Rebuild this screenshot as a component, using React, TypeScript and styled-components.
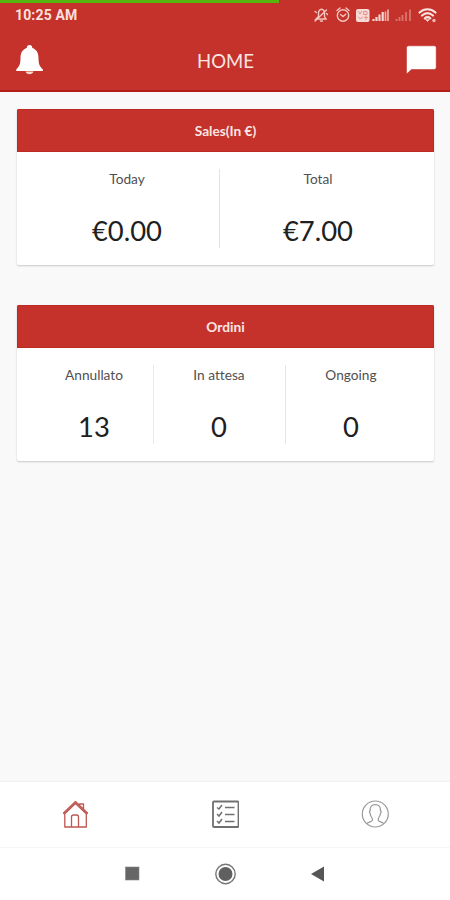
import React from "react";
import styled, { createGlobalStyle } from "styled-components";

const GlobalStyle = createGlobalStyle`
  * { box-sizing: border-box; }
  body { margin: 0; background: #f9f9f9; font-family: Lato, "Liberation Sans", sans-serif; font-variant-ligatures: none; }
  svg { display: block; flex: none; }
`;

const Screen = styled.div`
  width: 450px;
  height: 900px;
  display: flex;
  flex-direction: column;
  overflow: hidden;
  background: #f9f9f9;
`;

const TopArea = styled.div`
  height: 92px;
  background: #c4322b;
  border-bottom: 2px solid #b31d19;
`;

const Progress = styled.div`
  width: 279px;
  height: 3px;
  background: #55b60e;
`;

const StatusBar = styled.div`
  height: 27px;
  padding: 0 13px 4px 15px;
  display: flex;
  align-items: center;
  justify-content: space-between;
`;

const Clock = styled.span`
  color: #fbe0dc;
  font: 700 14px/16px Roboto, sans-serif;
  letter-spacing: 0.15px;
`;

const Header = styled.header`
  height: 60px;
  padding: 0 13px 0 16px;
  display: grid;
  grid-template-columns: 32px 1fr 32px;
  align-items: center;
`;

const Title = styled.h1`
  margin: 2px 2px 0 0;
  text-align: center;
  color: #fbe6e3;
  font-size: 18.5px;
  line-height: 24px;
  font-weight: 400;
`;

const Content = styled.main`
  flex: 1;
  display: flex;
  flex-direction: column;
  gap: 40px;
  padding: 17px 16px 0 17px;
`;

const Card = styled.section`
  height: 156px;
  border-radius: 2px;
  overflow: hidden;
  background: #fff;
  box-shadow: 0 1px 2px rgba(0, 0, 0, 0.2);
`;

const CardTitle = styled.h2`
  margin: 0;
  height: 43px;
  background: #c4322b;
  border: 1px solid #bd2a24;
  color: #fbe6e3;
  font-size: 13.7px;
  line-height: 42px;
  font-weight: 700;
  text-align: center;
`;

const Stats = styled.div<{ $columns: string }>`
  display: grid;
  grid-template-columns: ${(p) => p.$columns};
  padding: 17px 17px 0 18px;
`;

const Stat = styled.div<{ $line?: string }>`
  height: 79px;
  display: flex;
  flex-direction: column;
  align-items: center;
  box-shadow: ${(p) => (p.$line ? `1px 0 0 ${p.$line}` : "none")};
`;

const Label = styled.span`
  margin-top: 1px;
  color: #505050;
  font-size: 13.7px;
  line-height: 18px;
`;

const Value = styled.span`
  margin-top: 25px;
  color: #202020;
  font-size: 27.4px;
  line-height: 36px;
`;

const TabBar = styled.nav`
  height: 66px;
  padding-bottom: 1px;
  display: grid;
  grid-template-columns: repeat(3, 1fr);
  place-items: center;
  background: #fff;
  border-top: 1px solid #f0f0f0;
`;

const SystemBar = styled.div`
  height: 53px;
  display: flex;
  justify-content: center;
  align-items: center;
  gap: 72px;
  background: #fff;
  border-top: 1px solid #f6f6f6;
`;

const StatusIcons = () => (
  <svg width="124" height="20" viewBox="313 4 124 20" fill="none" stroke="#f4c6c0" strokeWidth="1.4" strokeLinecap="round">
    <path d="M316 18h10l-1.500-2.500v-3c0-2.500-1-4-3-4.300-2 .3-3 1.800-3 4.300v3zM320.500 20h2M326.500 9l-11.500 11M315 10.500l1.500 1M327.500 13.500l-1-1" />
    <circle cx="343" cy="14.500" r="5.700" />
    <path d="M337 9.500l3-2.500M349 9.500l-3-2.500M340.500 13.500l2.500 2 2.800-2.300" />
    <rect x="356" y="8" width="13.500" height="13" rx="2" fill="#f9d9d5" stroke="none" />
    <path d="M358.500 10.500l1.500 2.500 1.500-2.500M364 10.500h3v3h-3zM358.500 16l2 2 2-2M364.500 16.500h3M366 15v3.500" stroke="#dd958e" strokeWidth="1" />
    <g strokeWidth="2.200" strokeLinecap="butt" stroke="#f8d6d2">
      <path d="M373.500 20v-2M376.500 20v-4M379.500 20v-6.500M382.700 20v-9" />
      <path d="M385.500 20v-9.500M388 20V8.500" stroke="#eeb0aa" strokeWidth="1.700" />
      <path d="M396.500 20v-2M399.500 20v-4M402.500 20v-6M406 20v-9M410 20V8.500" stroke="#d9756d" strokeWidth="1.800" />
    </g>
    <path d="M419.500 11.500c5-4.300 11-4.300 16 0M422 14.500c3.500-3 7.500-3 11 0M424.800 17.300c2-1.500 3.800-1.500 5.500 0" strokeWidth="2.200" stroke="#fae2df" />
    <path d="M425.500 18.500l2 2 2-2z" fill="#fae2df" stroke="#fae2df" strokeWidth=".5" />
    <circle cx="434" cy="19.500" r="1.700" fill="#f0bab4" stroke="none" />
  </svg>
);

const BellIcon = () => (
  <svg width="28" height="32" viewBox="0 0 28 32" fill="#fff">
    <path d="M13.500 1c-1.700 0-2.700 1.200-2.700 3C6.500 5.300 4.500 9 4.500 14c0 6-1 8.300-4.200 11.200V27h26.500v-1.800c-3.300-2.900-4.300-5.200-4.300-11.200 0-5-2-8.700-6.200-10 0-1.800-1-3-2.800-3z" />
    <path d="M9.500 27.500h8c-.7 1.700-2.100 2.700-4 2.700s-3.400-1-4-2.700z" fill="#fbd7d1" />
  </svg>
);

const ChatIcon = () => (
  <svg width="32" height="32" viewBox="0 0 32 32">
    <path d="M3.500 1.800h26A1.700 1.700 0 0 1 31.200 3.500v20a2 2 0 0 1-2 2H6.500l-5 4.500V3.800a2 2 0 0 1 2-2z" fill="#fff" stroke="#b9221d" strokeWidth=".5" />
  </svg>
);

const HomeIcon = () => (
  <svg width="28" height="30" viewBox="0 0 28 30" fill="none" stroke="#bd5751" strokeWidth="1.300" strokeLinejoin="round">
    <path d="M2.500 14L14.500 2.500 26.500 14l-1 1L14.500 4.500 3.500 15zM3.800 14.500V28h21.500V14.500M10.500 28V18q0-2 2-2h3q2 0 2 2v10M18.500 6.300V5H22.500v5.200" />
  </svg>
);

const ListIcon = () => (
  <svg width="28" height="28" viewBox="0 0 28 28" fill="none" stroke="#707070">
    <rect x="2" y="1.500" width="25.500" height="25.500" rx="1" strokeWidth="1.800" />
    <path d="M6 7.500l2 1.500 3-4M6 14l2 2 3-4M6 21l2 2 3-4" strokeWidth="1.500" />
    <path d="M14 7.500h9.500M14 14.500h9.500M14 21.500h9.500" strokeWidth="1.600" />
  </svg>
);

const ProfileIcon = () => (
  <svg width="28" height="28" viewBox="0 0 28 28" fill="none" stroke="#999" strokeWidth="1.200">
    <circle cx="14.300" cy="14" r="13" />
    <path d="M5.800 23.700c1.500-2 4.300-1.700 5.300-3 .6-.9.300-2.200-.2-3-1-1.100-1.500-2.500-1.700-4-.8-1.100-.8-2.500 0-3.200C8.900 6.500 10.800 4.700 14.300 4.700s5.500 1.800 5.100 5.800c.8.700.8 2.100 0 3.200-.2 1.500-.7 2.900-1.700 4-.5.800-.8 2.100-.2 3 1 1.300 3.800 1 5.300 3" />
  </svg>
);

const SquareIcon = () => (
  <svg width="18" height="24" viewBox="0 0 18 24">
    <rect x="2.500" y="5" width="13.500" height="13" fill="#666" stroke="#858585" strokeWidth=".6" />
  </svg>
);

const CircleIcon = () => (
  <svg width="24" height="24" viewBox="0 0 24 24">
    <circle cx="12.500" cy="12" r="9.700" fill="#fff" stroke="#777" strokeWidth="1.400" />
    <circle cx="12.500" cy="12" r="7" fill="#606060" />
  </svg>
);

const BackIcon = () => (
  <svg width="18" height="24" viewBox="0 0 18 24">
    <path d="M2 12L15 4.500v15z" fill="#565656" />
  </svg>
);

export default function App() {
  return (
    <Screen>
      <GlobalStyle />
      <TopArea>
        <Progress />
        <StatusBar>
          <Clock>10:25 AM</Clock>
          <StatusIcons />
        </StatusBar>
        <Header>
          <BellIcon />
          <Title>HOME</Title>
          <ChatIcon />
        </Header>
      </TopArea>
      <Content>
        <Card>
          <CardTitle>Sales(In €)</CardTitle>
          <Stats $columns="184px 1fr">
            <Stat $line="#dfe6e8"><Label>Today</Label><Value>€0.00</Value></Stat>
            <Stat><Label>Total</Label><Value>€7.00</Value></Stat>
          </Stats>
        </Card>
        <Card>
          <CardTitle>Ordini</CardTitle>
          <Stats $columns="118px 1fr 1fr">
            <Stat $line="#e0eded"><Label>Annullato</Label><Value>13</Value></Stat>
            <Stat $line="#d3efe8"><Label>In attesa</Label><Value>0</Value></Stat>
            <Stat><Label>Ongoing</Label><Value>0</Value></Stat>
          </Stats>
        </Card>
      </Content>
      <TabBar>
        <HomeIcon />
        <ListIcon />
        <ProfileIcon />
      </TabBar>
      <SystemBar>
        <SquareIcon />
        <CircleIcon />
        <BackIcon />
      </SystemBar>
    </Screen>
  );
}
